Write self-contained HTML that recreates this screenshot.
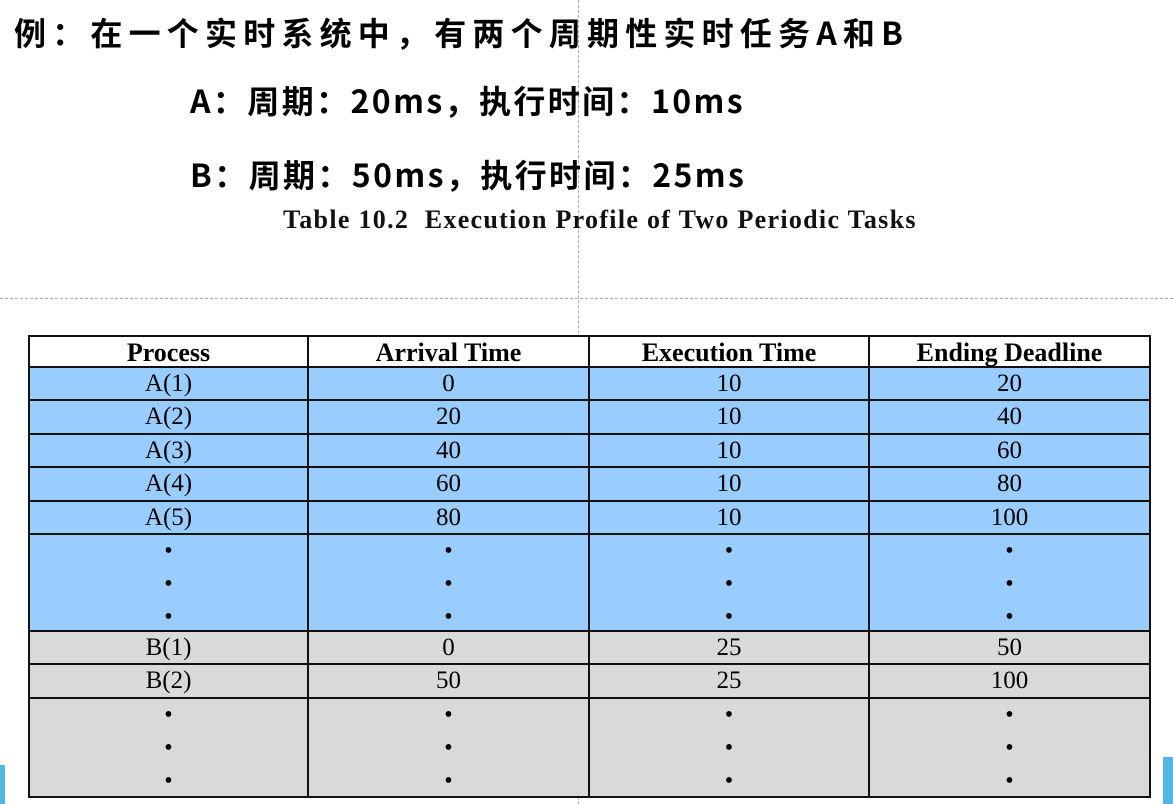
<!DOCTYPE html>
<html><head><meta charset="utf-8"><style>
*{margin:0;padding:0}
body{width:1173px;height:804px;background:#fff;position:relative;overflow:hidden}
.cj{position:absolute;font-family:"Noto Sans CJK SC","WenQuanYi Zen Hei",sans-serif;font-weight:bold;font-size:32px;color:#000;white-space:nowrap;line-height:40px}
.cap{position:absolute;left:283px;top:205px;font-family:"Liberation Serif",serif;font-weight:bold;font-size:26px;color:#111;white-space:nowrap;letter-spacing:1.3px}
.c{position:absolute;font-family:"Liberation Serif",serif;font-size:25px;text-align:center;color:#000;box-sizing:border-box;border-right:2px solid #111;border-bottom:2px solid #111;line-height:31px}
.h{font-weight:bold;background:#fff;font-size:26px}
.a{background:#99ccff}
.b{background:#d9d9d9}
.d{line-height:33px;font-size:24px}
</style></head><body>
<div style="position:absolute;left:578px;top:0;height:804px;border-left:1px dashed #aaa"></div>
<div style="position:absolute;left:0;top:298px;width:1173px;border-top:1px dashed #aaa"></div>
<div class="cj" style="left:14px;top:12px;letter-spacing:6.2px">例：在一个实时系统中，有两个周期性实时任务A和B</div>
<div class="cj" style="left:190px;top:80px;letter-spacing:2.4px">A：周期：20ms，执行时间：10ms</div>
<div class="cj" style="left:190px;top:154px;letter-spacing:2.4px">B：周期：50ms，执行时间：25ms</div>
<div class="cap">Table 10.2&nbsp; Execution Profile of Two Periodic Tasks</div>
<div style="position:absolute;left:28px;top:335px;width:1123px;height:463px;border-left:2px solid #111;border-top:2px solid #111;box-sizing:border-box"></div>
<div id="t"></div>
<div style="position:absolute;left:0;top:765px;width:5px;height:39px;background:#4fb6e6"></div>
<div style="position:absolute;left:1163px;top:757px;width:10px;height:47px;background:#4fb6e6"></div>
<script>
var cols=[28,309,590,870,1151];
var rows=[
["h",335,368,["Process","Arrival Time","Execution Time","Ending Deadline"]],
["a",368,401,["A(1)","0","10","20"]],
["a",401,435,["A(2)","20","10","40"]],
["a",435,468,["A(3)","40","10","60"]],
["a",468,502,["A(4)","60","10","80"]],
["a",502,535,["A(5)","80","10","100"]],
["a d",535,632,["•<br>•<br>•","•<br>•<br>•","•<br>•<br>•","•<br>•<br>•"]],
["b",632,665,["B(1)","0","25","50"]],
["b",665,699,["B(2)","50","25","100"]],
["b d",699,798,["•<br>•<br>•","•<br>•<br>•","•<br>•<br>•","•<br>•<br>•"]]];
var h="";
rows.forEach(function(r){for(var i=0;i<4;i++){var x=cols[i]+(i==0?2:0),y=r[1]+(r[0]=="h"?2:0);
h+='<div class="c '+r[0]+'" style="left:'+x+'px;top:'+y+'px;width:'+(cols[i+1]-x)+'px;height:'+(r[2]-y)+'px">'+r[3][i]+'</div>';}});
document.getElementById("t").outerHTML=h;
</script>
</body></html>
